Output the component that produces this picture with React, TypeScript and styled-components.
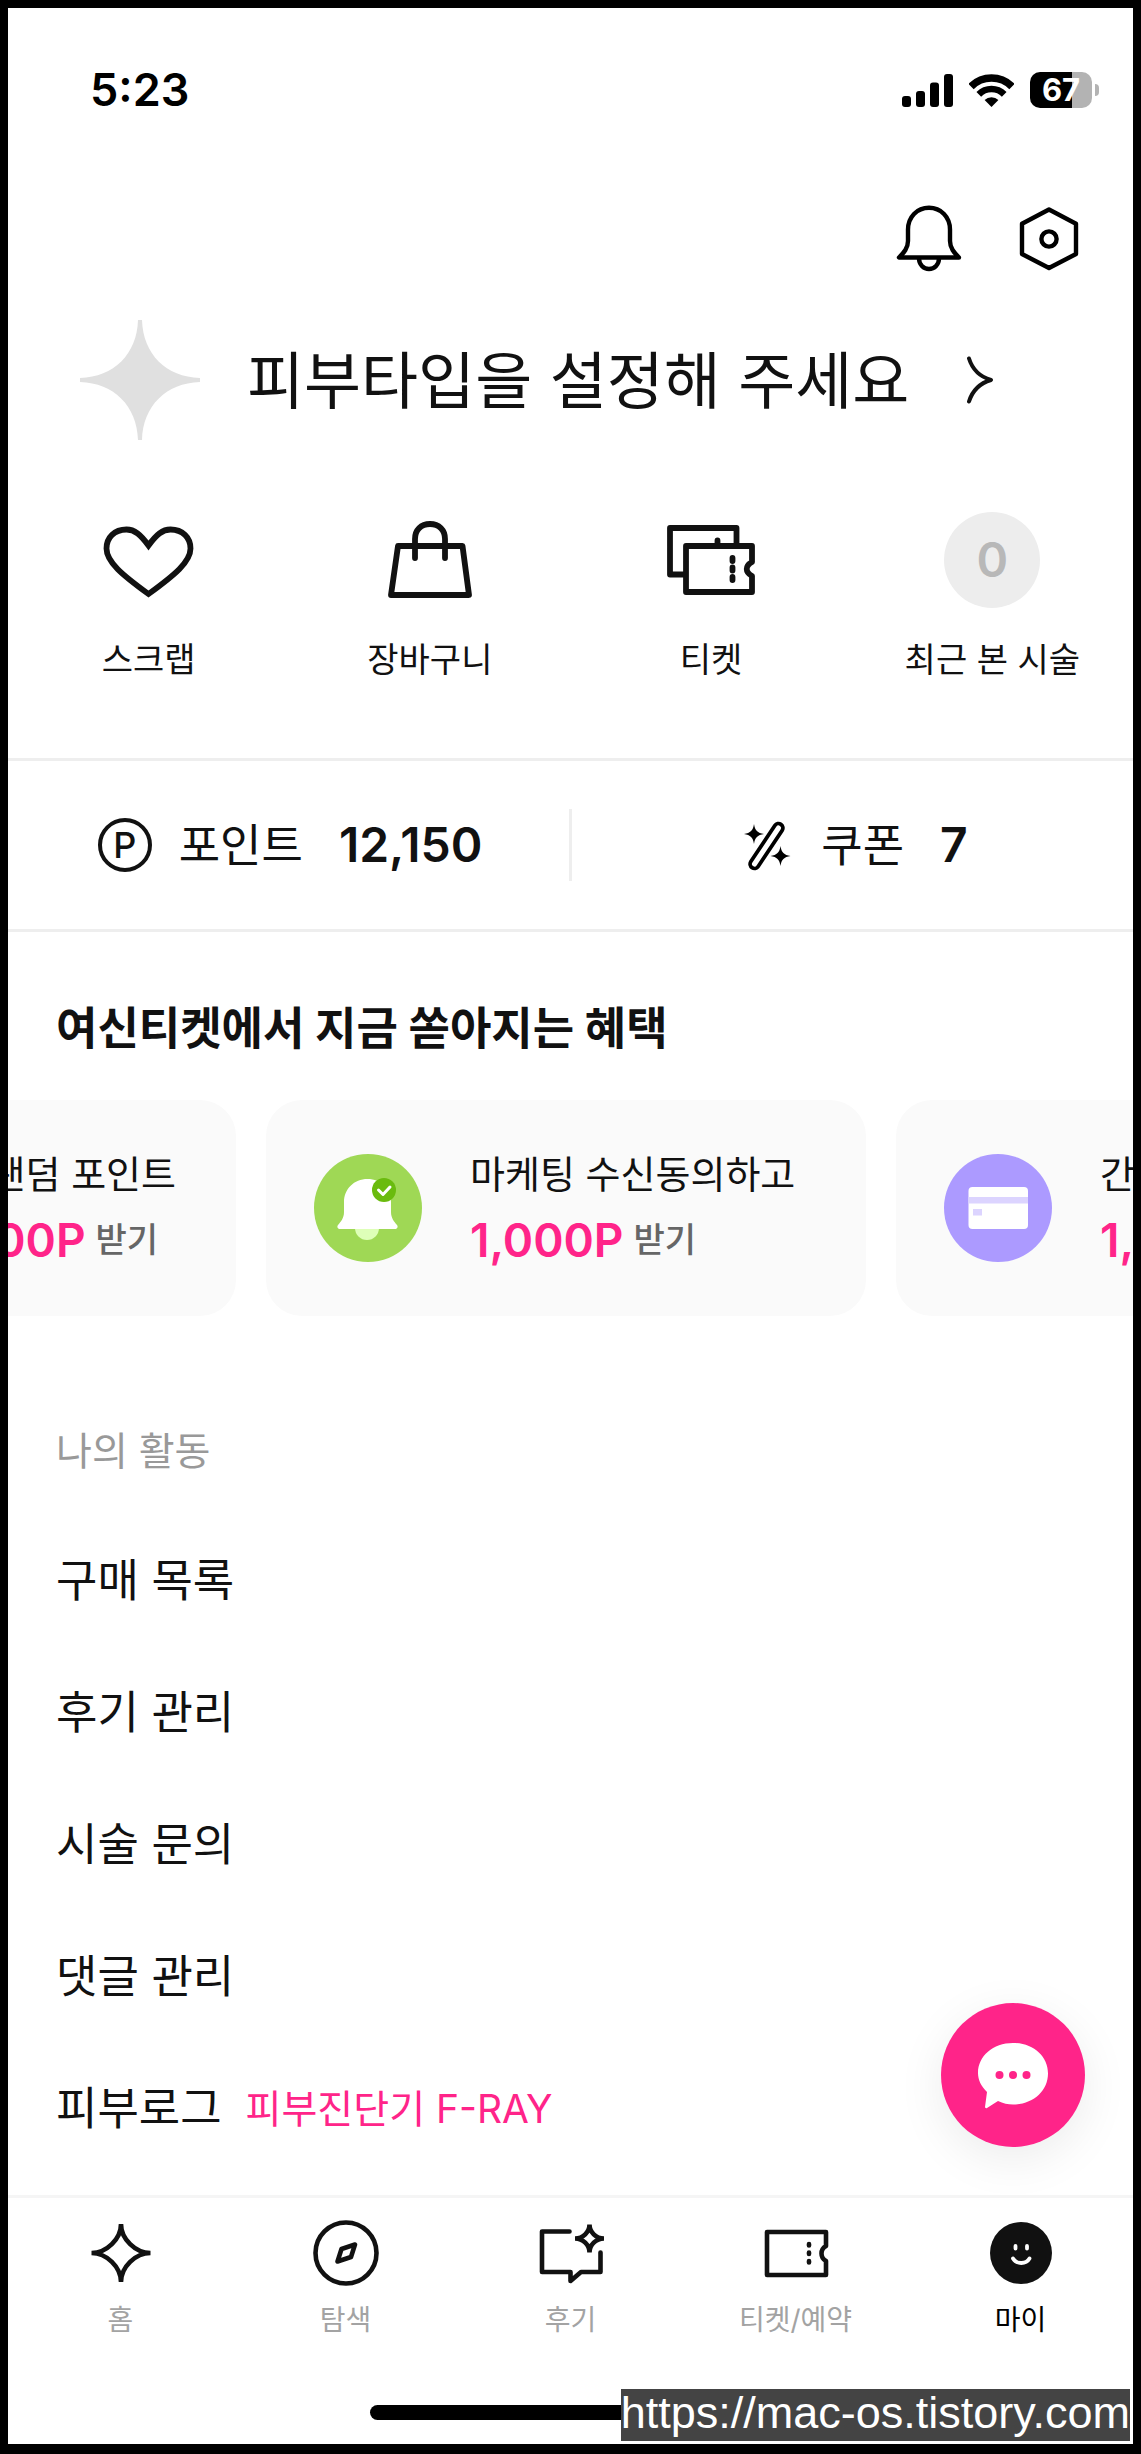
import React from 'react';
import styled, { createGlobalStyle } from 'styled-components';

const ink = '#111';
const pink = '#ff2489';
const line = '#eee';

const GlobalStyle = createGlobalStyle`
  *, *::before, *::after { box-sizing: border-box; }
  body {
    margin: 0;
    background: #fff;
    color: ${ink};
    font-family: Inter, "Noto Sans CJK KR", sans-serif;
  }
  a { color: inherit; text-decoration: none; }
  button {
    margin: 0;
    padding: 0;
    border: 0;
    background: none;
    color: inherit;
    font: inherit;
    text-align: left;
    cursor: pointer;
  }
  ul { margin: 0; padding: 0; list-style: none; }
  h1, h2, h3, p { margin: 0; }
  svg { display: block; flex: none; }
`;

const Frame = styled.div`
  position: relative;
  display: flex;
  flex-direction: column;
  min-height: 100vh;
  border: 8px solid #000;
  border-bottom-width: 10px;
  overflow: hidden;
`;

/* Status bar */

const StatusBar = styled.div`
  display: flex;
  align-items: center;
  justify-content: space-between;
  height: 164px;
  padding: 0 34px 0 82px;
  color: #000;
`;

const Clock = styled.span`
  font-size: 45px;
  font-weight: 600;
  line-height: 60px;
`;

const StatusIcons = styled.div`
  display: flex;
  align-items: center;
  gap: 16px;
`;

const BatteryWrap = styled.div`
  display: flex;
  align-items: center;
  gap: 3px;
`;

const BatteryBody = styled.span`
  width: 62px;
  border-radius: 10px;
  background: linear-gradient(to right, #000 68%, #b3b3b3 68%);
  color: #fff;
  font-size: 31px;
  font-weight: 700;
  line-height: 36px;
  text-align: center;
`;

const BatteryNub = styled.span`
  width: 4px;
  height: 12px;
  border-radius: 0 6px 6px 0;
  background: #b3b3b3;
`;

/* Header */

const Actions = styled.header`
  display: flex;
  align-items: center;
  justify-content: flex-end;
  gap: 48px;
  height: 134px;
  padding: 0 48px;
`;

const SkinTypeButton = styled.button`
  display: flex;
  align-items: center;
  margin-top: 14px;
  padding: 0 72px;
`;

const SkinTypeTitle = styled.h1`
  margin: 0 56px 0 47px;
  padding-top: 3px;
  font-size: 62px;
  font-weight: 400;
  line-height: 90px;
`;

/* Shortcuts */

const Shortcuts = styled.nav`
  display: grid;
  grid-template-columns: repeat(4, 1fr);
  padding: 72px 0 74px;
  border-bottom: 3px solid ${line};
`;

const Shortcut = styled.a`
  display: flex;
  flex-direction: column;
  align-items: center;
  gap: 28px;
  font-size: 34px;
  line-height: 48px;
`;

const CountCircle = styled.span`
  width: 96px;
  border-radius: 50%;
  background: #ededed;
  color: #b8b8b8;
  font-size: 48px;
  font-weight: 600;
  line-height: 96px;
  text-align: center;
`;

/* Points and coupons */

const Wallet = styled.section`
  display: flex;
  align-items: center;
  height: 171px;
  border-bottom: 3px solid ${line};
`;

const WalletItem = styled.a`
  display: flex;
  flex: 1;
  align-items: center;
  justify-content: center;
  line-height: 60px;
`;

const WalletDivider = styled.span`
  width: 3px;
  height: 72px;
  background: ${line};
`;

const PointBadge = styled.span`
  width: 54px;
  margin: 0 3px;
  border: 4px solid ${ink};
  border-radius: 50%;
  font-size: 36px;
  font-weight: 500;
  line-height: 46px;
  text-align: center;
`;

const WalletLabel = styled.span`
  margin: 0 36px 0 24px;
  padding-top: 2px;
  font-size: 45px;
`;

const WalletValue = styled.strong`
  font-size: 48px;
  font-weight: 600;
`;

/* Benefits carousel */

const SectionTitle = styled.h2`
  padding: 64px 48px 38px;
  font-size: 45px;
  font-weight: 700;
  line-height: 66px;
`;

const Carousel = styled.ul`
  display: flex;
  justify-content: center;
  gap: 30px;
  padding-right: 9px;
`;

const BenefitCard = styled.li`
  flex: none;
  width: 600px;
  border-radius: 36px;
  background: #fafafa;
`;

const BenefitLink = styled.a`
  display: flex;
  align-items: center;
  gap: 48px;
  height: 216px;
  padding: 0 48px;
  white-space: nowrap;
`;

const BenefitText = styled.div`
  display: flex;
  flex-direction: column;
  gap: 6px;
  padding-bottom: 3px;
`;

const BenefitLead = styled.span`
  font-size: 38px;
  line-height: 60px;
`;

const BenefitReward = styled.span`
  display: flex;
  align-items: center;
  gap: 10px;
  color: #666;
  font-size: 34px;
  font-weight: 500;
  line-height: 60px;
`;

const Amount = styled.strong`
  color: ${pink};
  font-size: 46px;
  font-weight: 600;
`;

/* Activity menu */

const MenuTitle = styled.h3`
  padding: 105px 48px 33px;
  color: #999;
  font-size: 39px;
  font-weight: 400;
  line-height: 60px;
`;

const MenuLink = styled.a`
  display: flex;
  align-items: center;
  gap: 24px;
  height: 132px;
  padding: 2px 48px 0;
  font-size: 45px;
  line-height: 60px;
`;

const MenuNote = styled.span`
  color: ${pink};
  font-size: 39px;
`;

/* Bottom navigation */

const TabBar = styled.nav`
  margin-top: auto;
  padding: 19px 0 24px;
  border-top: 3px solid #f5f5f5;
`;

const Tabs = styled.ul`
  display: grid;
  grid-template-columns: repeat(5, 1fr);
`;

const Tab = styled.a<{ $active?: boolean }>`
  display: flex;
  flex-direction: column;
  align-items: center;
  gap: 11px;
  color: ${(p) => (p.$active ? '#000' : '#a3a3a3')};
  font-size: 28px;
  line-height: 40px;
`;

const HomeIndicator = styled.div`
  width: 402px;
  height: 15px;
  margin: 65px auto 0;
  border-radius: 8px;
  background: #000;
`;

/* Overlays */

const ChatButton = styled.button`
  position: absolute;
  right: 48px;
  bottom: 297px;
  display: flex;
  align-items: center;
  justify-content: center;
  width: 144px;
  height: 144px;
  border-radius: 50%;
  background: ${pink};
  box-shadow: 0 12px 48px rgba(0, 0, 0, 0.08);
`;

const SiteLink = styled.a`
  position: absolute;
  right: 3px;
  bottom: 3px;
  padding-bottom: 4px;
  background: #444;
  color: #fff;
  font-family: "Liberation Sans", Arial, sans-serif;
  font-size: 45px;
  line-height: 48px;
`;

/* Icons */

const SignalIcon = () => (
  <svg width="51" height="33" viewBox="0 0 51 33" fill="#000">
    <rect x="0" y="22" width="9" height="11" rx="3" />
    <rect x="14" y="17" width="9" height="16" rx="3" />
    <rect x="28" y="8.5" width="9" height="24.5" rx="3" />
    <rect x="42" y="0" width="9" height="33" rx="3" />
  </svg>
);

const WifiIcon = () => (
  <svg width="45" height="33" viewBox="0 0 45 33" fill="none" stroke="#000">
    <path d="M2 12.5A29 29 0 0 1 43 12.5" strokeWidth="7.6" />
    <path d="M9.8 20.3A18 18 0 0 1 35.2 20.3" strokeWidth="6.6" />
    <path d="M22.5 33L15.6 26.1A9.7 9.7 0 0 1 29.4 26.1Z" fill="#000" stroke="none" />
  </svg>
);

const BellIcon = () => (
  <svg width="72" height="72" viewBox="0 0 72 72" fill="none" stroke="#000" strokeWidth="4.4" strokeLinejoin="round">
    <path d="M36 4.7C24 4.7 15 14 15 26.5V38C15 45 11 49.5 6 54.5H66C61 49.5 57 45 57 38V26.5C57 14 48 4.7 36 4.7Z" />
    <path d="M26 55.5A10 10.5 0 0 0 46 55.5" />
  </svg>
);

const HexagonIcon = () => (
  <svg width="72" height="72" viewBox="0 0 72 72" fill="none" stroke="#000" strokeWidth="4.4" strokeLinejoin="round">
    <path d="M36 6.5L63 20.7V51L36 65L9 51V20.7Z" />
    <circle cx="36" cy="36" r="7.6" />
  </svg>
);

const SparkleIcon = () => (
  <svg width="120" height="120" viewBox="0 0 120 120" fill="#e0e0e0">
    <path d="M58 0H62C63 34 86 57 120 58V62C86 63 63 86 62 120H58C57 86 34 63 0 62V58C34 57 57 34 58 0Z" />
  </svg>
);

const ChevronIcon = () => (
  <svg width="30" height="48" viewBox="0 0 30 48" fill="none" stroke={ink} strokeWidth="4" strokeLinecap="round" strokeLinejoin="round">
    <path d="M4 2.5C7 12 14 20.5 26 24C14 27.5 7 36 4 45.5" />
  </svg>
);

const shortcutStroke = {
  width: 96,
  height: 96,
  viewBox: '0 0 96 96',
  fill: 'none',
  stroke: ink,
  strokeWidth: 5.8,
  strokeLinecap: 'round',
  strokeLinejoin: 'round',
} as const;

const HeartIcon = () => (
  <svg {...shortcutStroke} strokeLinejoin="miter">
    <path d="M47.5 33.5C39.5 22.5 33.5 17.5 25.5 17.5C13.5 17.5 5.5 25.5 5.5 36.5C5.5 50 21.5 63 47.5 82C73.5 63 89.5 50 89.5 36.5C89.5 25.5 81.5 17.5 69.5 17.5C61.5 17.5 55.5 22.5 47.5 33.5Z" />
  </svg>
);

const BagIcon = () => (
  <svg {...shortcutStroke}>
    <path d="M16 34H80.5L87 83H9Z" />
    <path d="M33 46V27C33 18 39 12 48 12S63 18 63 27V46" />
  </svg>
);

const TicketsIcon = () => (
  <svg {...shortcutStroke}>
    <path d="M22 62.5H7V16H73.5V33M54.5 28.5V33" />
    <path d="M89 50V34H23V80H89V64C82 60 82 54 89 50Z" />
    <path d="M69.5 46V49M69.5 55.5V58.5M69.5 65V68" />
  </svg>
);

const WandIcon = () => (
  <svg width="60" height="60" viewBox="0 0 60 60" fill="#000">
    <path d="M41.5 13L17.5 49" stroke="#000" strokeWidth="12.5" strokeLinecap="round" />
    <path d="M41.5 13L17.5 49" stroke="#fff" strokeWidth="5" strokeLinecap="round" />
    <path d="M17 9C18 15.5 20.5 18 27 19C20.5 20 18 22.5 17 29C16 22.5 13.5 20 7 19C13.5 18 16 15.5 17 9Z" />
    <path d="M43.5 31C44.5 37.5 47 40 53.5 41C47 42 44.5 44.5 43.5 51C42.5 44.5 40 42 33.5 41C40 40 42.5 37.5 43.5 31Z" />
  </svg>
);

const BellBadgeIcon = () => (
  <svg width="108" height="108" viewBox="0 0 108 108">
    <circle cx="54" cy="54" r="54" fill="#9fd855" />
    <path d="M41 74H65A12 12 0 0 1 41 74Z" fill="#deffb8" />
    <path d="M53.5 25C40 25 30 35 30 48V58C30 64 27 67.5 24 71C22.5 73 24 75 26 75H81C83 75 84.5 73 83 71C80 67.5 77 64 77 58V48C77 35 67 25 53.5 25Z" fill="#fff" />
    <circle cx="70" cy="36" r="12" fill="#6abb0e" />
    <path d="M64.5 36L69 40.5L76 33" fill="none" stroke="#fff" strokeWidth="3" strokeLinecap="round" strokeLinejoin="round" />
  </svg>
);

const CardBadgeIcon = () => (
  <svg width="108" height="108" viewBox="0 0 108 108">
    <circle cx="54" cy="54" r="54" fill="#ac9aff" />
    <rect x="24.5" y="33" width="59.5" height="42" rx="4" fill="#fff" />
    <path d="M24.5 43H84V49.5H24.5ZM29 55H38V61.5H29Z" fill="#dcd4ff" />
  </svg>
);

const GiftBadgeIcon = () => (
  <svg width="108" height="108" viewBox="0 0 108 108">
    <circle cx="54" cy="54" r="54" fill="#ffb4d5" />
    <path d="M28 40H80V52H28ZM32 54H76V80H32Z" fill="#fff" />
  </svg>
);

const ChatIcon = () => (
  <svg width="72" height="72" viewBox="0 0 72 72" fill={pink}>
    <path d="M36 4C16 4 1 17 1 34C1 41 4 47 10 53L8 68C8 69 9 69.5 10 69L21 62C26 64.5 31 65.5 36 65.5C56 65.5 71 52 71 34.5C71 17 56 4 36 4Z" fill="#fff" />
    <circle cx="22.5" cy="36" r="4" />
    <circle cx="36" cy="36" r="4" />
    <circle cx="49.5" cy="36" r="4" />
  </svg>
);

const tabStroke = {
  width: 72,
  height: 72,
  viewBox: '0 0 72 72',
  fill: 'none',
  stroke: ink,
  strokeWidth: 4.6,
  strokeLinecap: 'round',
  strokeLinejoin: 'round',
} as const;

const HomeTabIcon = () => (
  <svg {...tabStroke} strokeLinejoin="bevel">
    <path d="M36 7C36 22 50.5 36 65.5 36C50.5 36 36 50 36 65C36 50 21.5 36 6.5 36C21.5 36 36 22 36 7Z" />
  </svg>
);

const CompassTabIcon = () => (
  <svg {...tabStroke}>
    <circle cx="36" cy="36" r="30.5" />
    <path d="M45 27.5L41 40L27.5 44.5L31.5 32Z" />
  </svg>
);

const ReviewTabIcon = () => (
  <svg {...tabStroke}>
    <path d="M34.5 14.5H7V55H35.5V64L46 55H65.5V35.5" />
    <path d="M54.5 7.5C54.5 15 61 21.5 69 21.5C61 21.5 54.5 28 54.5 35.5C54.5 28 48 21.5 40 21.5C48 21.5 54.5 15 54.5 7.5Z" strokeLinejoin="bevel" />
  </svg>
);

const TicketTabIcon = () => (
  <svg {...tabStroke}>
    <path d="M66 29V15H7V58H66V44C60 40.5 60 32.5 66 29Z" />
    <path d="M49 27V28.5M49 35.5V37M49 44V45.5" />
  </svg>
);

const MyTabIcon = () => (
  <svg {...tabStroke} stroke="#fff" strokeWidth="3.8">
    <circle cx="36" cy="36" r="31" fill={ink} stroke="none" />
    <path d="M30.5 29V31.5M42 29V31.5M28 41.5C31.5 47.5 41 47.5 44.5 41.5" />
  </svg>
);

/* Content */

const benefits = [
  { lead: '매일매일 랜덤 포인트', prefix: '최대', amount: '11,000P', icon: <GiftBadgeIcon /> },
  { lead: '마케팅 수신동의하고', prefix: '', amount: '1,000P', icon: <BellBadgeIcon /> },
  { lead: '간편결제 등록하고', prefix: '', amount: '1,000P', icon: <CardBadgeIcon /> },
];

const menu: { label: string; note?: string }[] = [
  { label: '구매 목록' },
  { label: '후기 관리' },
  { label: '시술 문의' },
  { label: '댓글 관리' },
  { label: '피부로그', note: '피부진단기 F-RAY' },
];

const tabs = [
  { label: '홈', icon: <HomeTabIcon /> },
  { label: '탐색', icon: <CompassTabIcon /> },
  { label: '후기', icon: <ReviewTabIcon /> },
  { label: '티켓/예약', icon: <TicketTabIcon /> },
  { label: '마이', icon: <MyTabIcon />, active: true },
];

export default function App() {
  return (
    <>
      <GlobalStyle />
      <Frame>
        <StatusBar>
          <Clock>5:23</Clock>
          <StatusIcons>
            <SignalIcon />
            <WifiIcon />
            <BatteryWrap>
              <BatteryBody>67</BatteryBody>
              <BatteryNub />
            </BatteryWrap>
          </StatusIcons>
        </StatusBar>

        <Actions>
          <button type="button" aria-label="알림"><BellIcon /></button>
          <button type="button" aria-label="설정"><HexagonIcon /></button>
        </Actions>

        <SkinTypeButton type="button">
          <SparkleIcon />
          <SkinTypeTitle>피부타입을 설정해 주세요</SkinTypeTitle>
          <ChevronIcon />
        </SkinTypeButton>

        <Shortcuts>
          <Shortcut href="#scrap"><HeartIcon />스크랩</Shortcut>
          <Shortcut href="#cart"><BagIcon />장바구니</Shortcut>
          <Shortcut href="#ticket"><TicketsIcon />티켓</Shortcut>
          <Shortcut href="#recent"><CountCircle>0</CountCircle>최근 본 시술</Shortcut>
        </Shortcuts>

        <Wallet>
          <WalletItem href="#point">
            <PointBadge>P</PointBadge>
            <WalletLabel>포인트</WalletLabel>
            <WalletValue>12,150</WalletValue>
          </WalletItem>
          <WalletDivider />
          <WalletItem href="#coupon">
            <WandIcon />
            <WalletLabel>쿠폰</WalletLabel>
            <WalletValue>7</WalletValue>
          </WalletItem>
        </Wallet>

        <SectionTitle>여신티켓에서 지금 쏟아지는 혜택</SectionTitle>
        <Carousel>
          {benefits.map((b) => (
            <BenefitCard key={b.lead}>
              <BenefitLink href="#benefit">
                {b.icon}
                <BenefitText>
                  <BenefitLead>{b.lead}</BenefitLead>
                  <BenefitReward>
                    {b.prefix && <span>{b.prefix}</span>}
                    <Amount>{b.amount}</Amount>
                    <span>받기</span>
                  </BenefitReward>
                </BenefitText>
              </BenefitLink>
            </BenefitCard>
          ))}
        </Carousel>

        <MenuTitle>나의 활동</MenuTitle>
        <ul>
          {menu.map((m) => (
            <li key={m.label}>
              <MenuLink href="#menu">
                {m.label}
                {m.note && <MenuNote>{m.note}</MenuNote>}
              </MenuLink>
            </li>
          ))}
        </ul>

        <TabBar>
          <Tabs>
            {tabs.map((t) => (
              <li key={t.label}>
                <Tab href="#tab" $active={t.active}>
                  {t.icon}
                  {t.label}
                </Tab>
              </li>
            ))}
          </Tabs>
          <HomeIndicator />
        </TabBar>

        <ChatButton type="button" aria-label="채팅 상담"><ChatIcon /></ChatButton>
        <SiteLink href="https://mac-os.tistory.com">https://mac-os.tistory.com</SiteLink>
      </Frame>
    </>
  );
}
